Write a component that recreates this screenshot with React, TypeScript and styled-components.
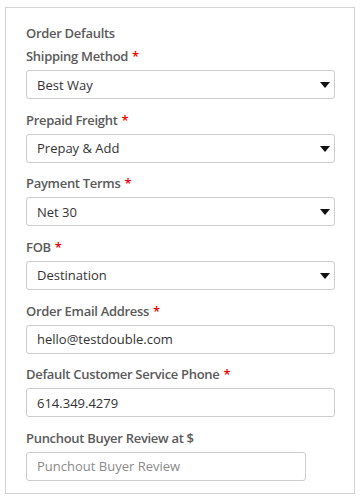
import React from 'react';
import styled, { createGlobalStyle } from 'styled-components';

const GlobalStyle = createGlobalStyle`
  body {
    margin: 0;
    background: #ffffff;
    font-family: "Open Sans", "Noto Sans", sans-serif;
  }
  * {
    box-sizing: border-box;
  }
`;

const StPanel = styled.section`
  width: 350px;
  margin: 7px 0 0 5px;
  padding: 15px 19px 12px 20px;
  border: 1px solid #d3d3d3;
  display: flex;
  flex-direction: column;
`;

const StTitle = styled.h3`
  margin: 0 0 3px 0;
  height: 20px;
  line-height: 20px;
  font-size: 13px;
  letter-spacing: -0.3px;
  font-weight: 600;
  color: #5a5a5a;
`;

const StField = styled.div`
  display: flex;
  flex-direction: column;
  margin-bottom: 10.66px;

  &:last-child {
    margin-bottom: 0;
  }
`;

const StLabel = styled.label`
  height: 20px;
  line-height: 20px;
  margin-bottom: 4px;
  font-size: 13px;
  letter-spacing: -0.3px;
  font-weight: 600;
  color: #5a5a5a;
`;

const StRequired = styled.span`
  color: #ee0000;
  margin-left: 4px;
`;

type BoxProps = {
  $width?: number;
};

const StInput = styled.input<BoxProps>`
  width: ${(props) => (props.$width ? `${props.$width}px` : '100%')};
  height: 29px;
  padding: 0 10px;
  border: 1px solid #cccccc;
  border-radius: 3px;
  font-family: inherit;
  font-size: 13px;
  color: #333333;
  background: #ffffff;
  outline: none;

  &::placeholder {
    color: #8a8a8a;
  }
`;

const StSelectWrap = styled.div`
  position: relative;
  width: 100%;
`;

const StSelect = styled.select`
  appearance: none;
  -webkit-appearance: none;
  width: 100%;
  height: 29px;
  padding: 0 28px 0 10px;
  border: 1px solid #cccccc;
  border-radius: 3px;
  font-family: inherit;
  font-size: 13px;
  color: #333333;
  background: #ffffff;
  outline: none;
`;

const StCaret = styled.svg`
  position: absolute;
  right: 5px;
  top: 12px;
  pointer-events: none;
`;

const selects = [
  { label: 'Shipping Method', value: 'Best Way' },
  { label: 'Prepaid Freight', value: 'Prepay & Add' },
  { label: 'Payment Terms', value: 'Net 30' },
  { label: 'FOB', value: 'Destination' }
];

const App = () => {
  return (
    <>
      <GlobalStyle />
      <StPanel>
        <StTitle>Order Defaults</StTitle>
        {selects.map((item, i) => (
          <StField key={i}>
            <StLabel>
              {item.label}
              <StRequired>*</StRequired>
            </StLabel>
            <StSelectWrap>
              <StSelect defaultValue={item.value}>
                <option>{item.value}</option>
              </StSelect>
              <StCaret width="10" height="6" viewBox="0 0 10 6">
                <path d="M0 0 L10 0 L5 6 Z" fill="#111" />
              </StCaret>
            </StSelectWrap>
          </StField>
        ))}
        <StField>
          <StLabel>
            Order Email Address<StRequired>*</StRequired>
          </StLabel>
          <StInput defaultValue="hello@testdouble.com" />
        </StField>
        <StField>
          <StLabel>
            Default Customer Service Phone<StRequired>*</StRequired>
          </StLabel>
          <StInput defaultValue="614.349.4279" />
        </StField>
        <StField>
          <StLabel>Punchout Buyer Review at $</StLabel>
          <StInput $width={280} placeholder="Punchout Buyer Review" />
        </StField>
      </StPanel>
    </>
  );
};

export default App;
